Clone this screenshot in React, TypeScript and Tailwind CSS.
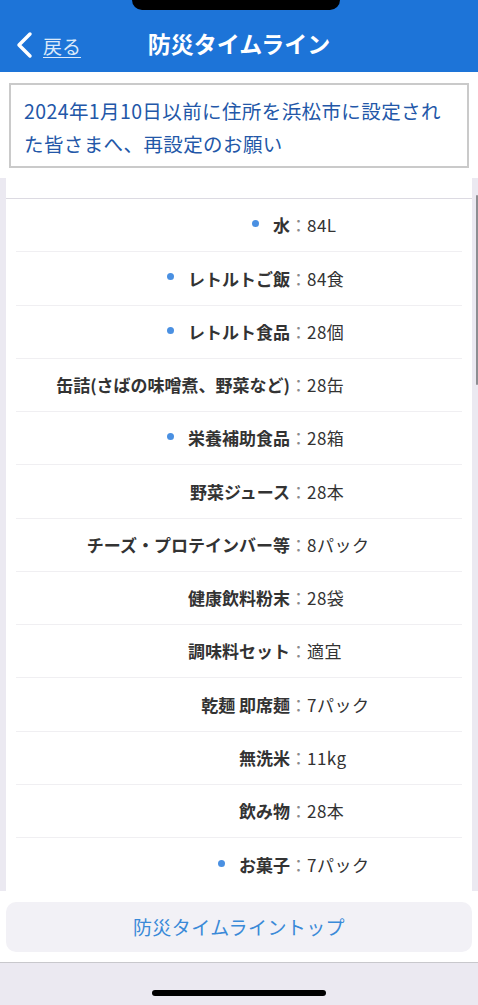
import React from 'react'

interface Item {
    label: string;
    value: string;
    dot: boolean;
}

const items: Item[] = [
    { label: '水', value: '84L', dot: true },
    { label: 'レトルトご飯', value: '84食', dot: true },
    { label: 'レトルト食品', value: '28個', dot: true },
    { label: '缶詰(さばの味噌煮、野菜など)', value: '28缶', dot: false },
    { label: '栄養補助食品', value: '28箱', dot: true },
    { label: '野菜ジュース', value: '28本', dot: false },
    { label: 'チーズ・プロテインバー等', value: '8パック', dot: false },
    { label: '健康飲料粉末', value: '28袋', dot: false },
    { label: '調味料セット', value: '適宜', dot: false },
    { label: '乾麺 即席麺', value: '7パック', dot: false },
    { label: '無洗米', value: '11kg', dot: false },
    { label: '飲み物', value: '28本', dot: false },
    { label: 'お菓子', value: '7パック', dot: true },
]

export default function App() {
  return (
    <div className='w-[478px] h-[1005px] flex flex-col bg-white overflow-hidden' style={{ fontFamily: '"Noto Sans CJK JP", "Noto Sans", sans-serif' }}>
        {/* header */}
        <div className='relative h-[72px] shrink-0 bg-[#1d74d8] flex items-center'>
            <div className='absolute top-0 left-[132px] w-[208px] h-[10px] bg-black rounded-b-[10px]'></div>
            <div className='flex items-center pl-[14px] pt-[18px]'>
                <svg width="22" height="28" viewBox="0 0 22 28" fill="none">
                    <path d="M16 3 L5 14 L16 25" stroke="white" strokeWidth="3.5" strokeLinecap="round" strokeLinejoin="round" />
                </svg>
                <span className='ml-[7px] text-[19px] text-[#dbe9fa] underline underline-offset-[3px] leading-none'>戻る</span>
            </div>
            <p className='absolute left-0 right-0 top-[28px] text-center text-white font-bold text-[23px] leading-[30px]'>防災タイムライン</p>
        </div>

        {/* notice */}
        <div className='mt-[11px] mx-[9px] h-[85px] shrink-0 border-2 border-[#cacaca] px-[13px] pt-[9px]'>
            <p className='text-[#2357a8] text-[19.5px] leading-[33px] whitespace-nowrap tracking-[0.4px]'>
                2024年1月10日以前に住所を浜松市に設定され<br />た皆さまへ、再設定のお願い
            </p>
        </div>

        {/* list */}
        <div className='relative mt-[10px] flex-1 bg-[#ebe9f1] px-[6px] overflow-hidden'>
            <div className='h-full bg-white flex flex-col'>
                <div className='h-[21px] shrink-0 border-b border-[#dcdae2]'></div>
                <div className='px-[10px]'>
                    {items.map((item, index) => (
                        <div key={index} className={`h-[53.25px] flex items-center ${index < items.length - 1 ? 'border-b border-[#f0eff2]' : ''}`}>
                            <div className='w-[274px] flex justify-end items-center'>
                                {item.dot && <span className='w-[7px] h-[7px] rounded-full bg-[#4a90e2] mr-[14px] -mt-[3px]'></span>}
                                <span className='text-[17px] font-bold text-[#333333] whitespace-nowrap'>{item.label}</span>
                            </div>
                            <span className='text-[17px] text-[#8a8a8a]'>：</span>
                            <span className='text-[17px] text-[#333333] whitespace-nowrap tracking-[0.5px]'>{item.value}</span>
                        </div>
                    ))}
                </div>
            </div>
            <div className='absolute right-0 top-[17px] w-[2px] h-[190px] bg-[#8d8d92] rounded-full'></div>
        </div>

        {/* bottom button */}
        <div className='h-[72px] shrink-0 bg-white px-[6px] pt-[11px] border-b border-[#c8c8cc]'>
            <button className='w-full h-[50px] rounded-[10px] bg-[#f2f1f6] text-[#3a8ad8] text-[19px] tracking-[0.4px]'>防災タイムライントップ</button>
        </div>
        <div className='h-[42px] shrink-0 bg-[#ebe9f1] flex justify-center pt-[27px]'>
            <div className='w-[174px] h-[6px] rounded-full bg-black'></div>
        </div>
    </div>
  )
}
